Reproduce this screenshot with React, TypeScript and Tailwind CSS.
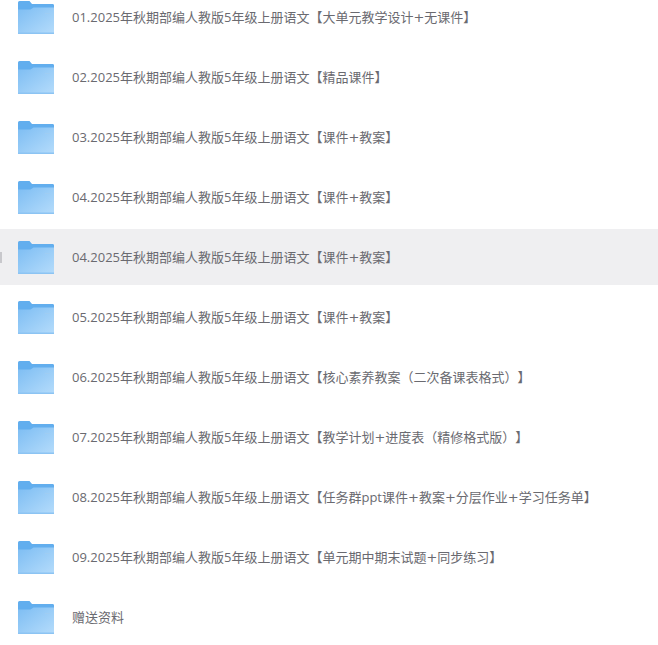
import React from "react";

const rows = [
  "01.2025年秋期部编人教版5年级上册语文【大单元教学设计+无课件】",
  "02.2025年秋期部编人教版5年级上册语文【精品课件】",
  "03.2025年秋期部编人教版5年级上册语文【课件+教案】",
  "04.2025年秋期部编人教版5年级上册语文【课件+教案】",
  "04.2025年秋期部编人教版5年级上册语文【课件+教案】",
  "05.2025年秋期部编人教版5年级上册语文【课件+教案】",
  "06.2025年秋期部编人教版5年级上册语文【核心素养教案（二次备课表格式）】",
  "07.2025年秋期部编人教版5年级上册语文【教学计划+进度表（精修格式版）】",
  "08.2025年秋期部编人教版5年级上册语文【任务群ppt课件+教案+分层作业+学习任务单】",
  "09.2025年秋期部编人教版5年级上册语文【单元期中期末试题+同步练习】",
  "赠送资料",
];

const FolderIcon = ({ id }: { id: number }) => (
  <svg width="36" height="33" viewBox="0 0 36 33" className="mt-[1px] shrink-0">
    <defs>
      <linearGradient id={`front${id}`} x1="0" y1="0" x2="1" y2="1">
        <stop offset="0" stopColor="#7dbdf3" />
        <stop offset="1" stopColor="#b5dcfb" />
      </linearGradient>
    </defs>
    <path d="M0 1.5Q0 0 1.5 0H11.5L14 3H35Q36 3 36 4.5V12H0Z" fill="#62aeee" />
    <path d="M0 8.5H12.5L15.5 6.5H36V32Q36 33 35 33H0Z" fill={`url(#front${id})`} />
    <rect x="0" y="31.5" width="36" height="1.5" fill="#8cc4f3" />
    <rect x="27" y="12" width="5" height="1" fill="#9fcdf3" />
  </svg>
);

// the plus sign is wider in the original font
const Label = ({ text }: { text: string }) => (
  <span className="whitespace-nowrap pt-[2px] [text-spacing-trim:space-all]">
    {text.split("+").map((part, i) => (
      <React.Fragment key={i}>
        {i > 0 && <span className="font-['DejaVu_Sans',sans-serif]">+</span>}
        {part}
      </React.Fragment>
    ))}
  </span>
);

export default function App() {
  return (
    <div className="w-[658px] h-[645px] overflow-hidden bg-white font-['Open_Sans','Noto_Sans_CJK_SC',sans-serif] text-[13px] text-[#6a6a70]">
      <div className="-mt-[13px] flex flex-col">
        {rows.map((text, i) => (
          <div key={i} className="flex h-[60px] items-center">
            <div className={`relative flex h-[56px] w-full items-center gap-[18px] pl-[18px] ${i === 4 ? "bg-[#efeff1]" : ""}`}>
              {i === 4 && <span className="absolute left-0 top-[23px] h-[11px] w-[2px] bg-[#c8c8cc]" />}
              <FolderIcon id={i} />
              <Label text={text} />
            </div>
          </div>
        ))}
      </div>
    </div>
  );
}
